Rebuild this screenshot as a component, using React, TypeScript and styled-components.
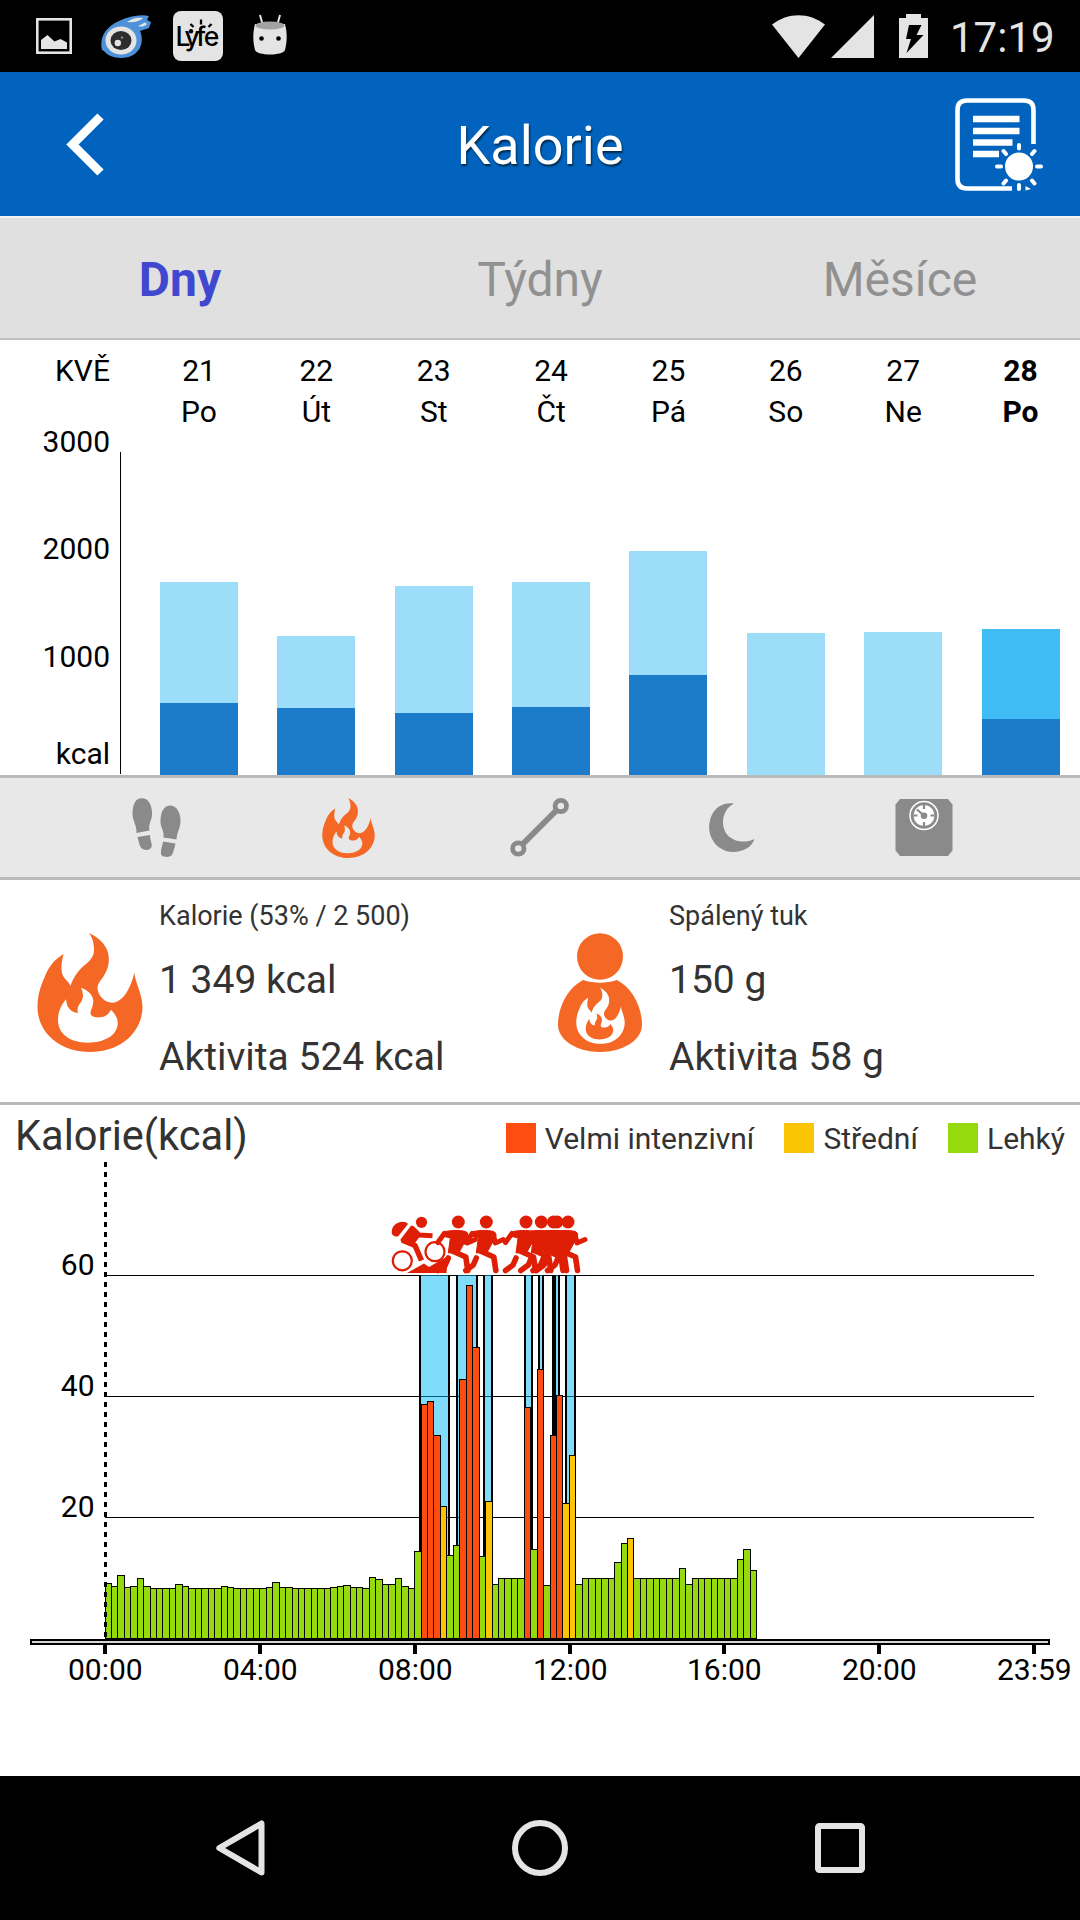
import React from "react";
import styled, { createGlobalStyle } from "styled-components";

const Global = createGlobalStyle`
  * { box-sizing: border-box; }
  body { margin: 0; background: #fff; font-family: Roboto, "Noto Sans", sans-serif; }
  svg { display: block; flex: none; overflow: visible; }
`;

const Screen = styled.div`
  width: 1080px;
  height: 1920px;
  display: flex;
  flex-direction: column;
  background: #fff;
  overflow: hidden;
`;

const StatusBar = styled.header`
  height: 72px;
  flex: none;
  display: flex;
  align-items: center;
  justify-content: space-between;
  background: #000;
  padding: 0 25px 0 36px;
`;

const StatusGroup = styled.div<{ $gap: number }>`
  display: flex;
  align-items: center;
  gap: ${(p) => p.$gap}px;
`;

const Clock = styled.span`
  color: #e4e4e4;
  font-size: 42px;
  line-height: 50px;
  padding-top: 3px;
  margin-left: 22px;
  width: 105px;
  white-space: nowrap;
`;

const TitleBar = styled.div`
  height: 146px;
  flex: none;
  display: grid;
  grid-template-columns: 200px 1fr 200px;
  align-items: center;
  background: #0163bd;
  padding-top: 1px;
  border-bottom: 2px solid #f3f3f3;
`;

const BackSlot = styled.div`
  padding-left: 66px;
`;

const ReportSlot = styled.div`
  display: flex;
  padding-left: 75px;
`;

const Title = styled.h1`
  margin: 0;
  padding-top: 2px;
  text-align: center;
  color: #fff;
  font-size: 54px;
  line-height: 64px;
  font-weight: 400;
  text-shadow: 1px 2px 2px rgba(0, 0, 0, 0.6);
`;

const Tabs = styled.nav`
  height: 122px;
  flex: none;
  display: grid;
  grid-template-columns: repeat(3, 1fr);
  align-items: center;
  background: #e0e0e0;
  border-bottom: 2px solid #c0c0c0;
`;

const Tab = styled.div<{ $active?: boolean }>`
  text-align: center;
  font-size: 48px;
  line-height: 56px;
  padding-top: 4px;
  color: ${(p) => (p.$active ? "#4048d0" : "#919191")};
  font-weight: ${(p) => (p.$active ? 700 : 400)};
`;

const Week = styled.section`
  height: 435px;
  flex: none;
  display: flex;
`;

const WeekScale = styled.div`
  width: 120px;
  padding: 10px 10px 0 0;
  display: flex;
  flex-direction: column;
  align-items: flex-end;
  font-size: 30px;
  line-height: 30px;
  color: #000;
`;

const Month = styled.div`
  height: 77px;
  line-height: 41px;
`;

const ScaleMark = styled.div<{ $after: number }>`
  margin-bottom: ${(p) => p.$after}px;
`;

const WeekAxis = styled.div`
  width: 1px;
  height: 322px;
  margin-top: 112px;
  background: #000;
`;

const Days = styled.div`
  margin-left: 19.32px;
  display: grid;
  grid-template-columns: repeat(8, 117.36px);
`;

const Day = styled.div<{ $today: boolean }>`
  padding-top: 10px;
  display: flex;
  flex-direction: column;
  align-items: center;
  font-size: 30px;
  line-height: 41px;
  color: #000;
  font-weight: ${(p) => (p.$today ? 700 : 400)};
`;

const Stack = styled.div`
  width: 78px;
  margin-top: auto;
`;

const Rest = styled.div<{ $today: boolean }>`
  background: ${(p) => (p.$today ? "#41bdf5" : "#9cddf9")};
`;

const Active = styled.div`
  background: #1d7cc9;
`;

const Metrics = styled.nav`
  height: 105px;
  flex: none;
  display: grid;
  grid-template-columns: repeat(5, 192px);
  justify-content: center;
  align-items: center;
  justify-items: center;
  background: #e8e8e8;
  border-top: 3px solid #bababa;
  border-bottom: 3px solid #bababa;
`;

const Summary = styled.section`
  height: 225px;
  flex: none;
  display: grid;
  grid-template-columns: 159px 350px 160px 1fr;
  border-bottom: 3px solid #bababa;
`;

const SummaryIcon = styled.div<{ $left: number }>`
  padding: 53px 0 0 ${(p) => p.$left}px;
`;

const Facts = styled.div`
  padding-top: 18px;
  color: #333;
  white-space: nowrap;
`;

const FactLabel = styled.div`
  font-size: 27px;
  line-height: 36px;
  margin-bottom: 22px;
`;

const FactValue = styled.div`
  font-size: 39px;
  line-height: 48px;
  margin-bottom: 29px;
`;

const HourHead = styled.div`
  height: 55px;
  flex: none;
  display: flex;
  align-items: center;
  justify-content: space-between;
  padding: 7px 15px 0 15px;
  color: #333;
`;

const HourTitle = styled.h2`
  margin: 0;
  font-size: 41.6px;
  line-height: 48px;
  font-weight: 400;
`;

const Legend = styled.div`
  display: flex;
  gap: 30px;
  padding-top: 6px;
`;

const LegendItem = styled.div`
  display: flex;
  align-items: center;
  gap: 9.2px;
  font-size: 30px;
  line-height: 30px;
  white-space: nowrap;
`;

const Swatch = styled.span<{ $color: string }>`
  width: 30px;
  height: 30px;
  margin-top: -2px;
  background: ${(p) => p.$color};
`;

const NavBar = styled.footer`
  height: 144px;
  margin-top: auto;
  flex: none;
  display: flex;
  align-items: center;
  justify-content: center;
  gap: 247px;
  background: #000;
`;

const RED = "#ff4d11";
const AMBER = "#fbc404";
const GREEN = "#95da0c";
const ORANGE = "#f46724";
const SPORT = "#df1f05";
const GREY = "#8a8a8a";

const week = [
  { date: "21", name: "Po", rest: 121, active: 72 },
  { date: "22", name: "Út", rest: 72, active: 67 },
  { date: "23", name: "St", rest: 127, active: 62 },
  { date: "24", name: "Čt", rest: 125, active: 68 },
  { date: "25", name: "Pá", rest: 124, active: 100 },
  { date: "26", name: "So", rest: 142, active: 0 },
  { date: "27", name: "Ne", rest: 143, active: 0 },
  { date: "28", name: "Po", rest: 90, active: 56 },
];

// Bar heights above the base line, one per ten minutes: [height, repeat, colour]
const runs: [number, number, string][] = [
  [55, 1, GREEN], [52, 1, GREEN], [63, 1, GREEN], [51, 1, GREEN], [52, 1, GREEN], [60, 1, GREEN],
  [52, 1, GREEN], [50, 4, GREEN], [54, 1, GREEN], [52, 1, GREEN], [50, 5, GREEN], [52, 1, GREEN],
  [51, 1, GREEN], [50, 5, GREEN], [51, 1, GREEN], [56, 1, GREEN], [51, 2, GREEN], [50, 6, GREEN],
  [51, 1, GREEN], [52, 1, GREEN], [53, 1, GREEN], [51, 2, GREEN], [50, 1, GREEN], [61, 1, GREEN],
  [59, 1, GREEN], [54, 2, GREEN], [60, 1, GREEN], [52, 1, GREEN], [50, 1, GREEN], [87, 1, GREEN],
  [234, 1, RED], [237, 1, RED], [203, 1, RED], [132, 1, AMBER], [83, 1, GREEN], [93, 1, GREEN],
  [259, 1, RED], [353, 1, RED], [291, 1, RED], [82, 1, GREEN], [137, 1, AMBER], [54, 1, GREEN],
  [60, 4, GREEN], [231, 1, RED], [89, 1, GREEN], [269, 1, RED], [53, 1, GREEN], [203, 1, RED],
  [243, 1, RED], [135, 1, AMBER], [183, 1, AMBER], [54, 1, GREEN], [60, 5, GREEN], [76, 1, GREEN],
  [95, 1, GREEN], [100, 1, AMBER], [60, 7, GREEN], [70, 1, GREEN], [54, 1, GREEN], [60, 7, GREEN],
  [79, 1, GREEN], [89, 1, GREEN], [68, 1, GREEN],
];
const bars = runs.flatMap(([h, n, c]) => Array.from({ length: n }, () => ({ h, c })));
const edge = (i: number) => Math.floor(104.9 + i * 6.452) + (i === 0 ? 1 : 0);

// Exercise intervals: outer left, width of left rule, outer right
const spans = [
  [419, 2, 450], [456, 2, 478], [483, 2, 493], [524, 2, 533], [538, 2, 544], [552, 4, 560], [565, 2, 576],
];

const ticks = ["00:00", "04:00", "08:00", "12:00", "16:00", "20:00", "23:59"];
const tickX = [105, 260, 415, 570, 724, 879, 1034];

function Flame({ w, h, color }: { w: number; h: number; color: string }) {
  return (
    <svg width={w} height={h} viewBox="0 0 106 119" preserveAspectRatio="none">
      <FlameShape color={color} />
    </svg>
  );
}

function FlameShape({ color }: { color: string }) {
  return (
    <path
      fill={color}
      fillRule="evenodd"
      d="M51.9 0C63 5 71.8 14 71.8 25.3C72 33 70 38 66.3 43.7C62 49 60.5 52 60.5 55.3C61 63 68 69.7 75 69.7C82 69.7 88 63 91 57C94 51 96 46 97.3 39.5C98.500 51 105.500 61 105.500 74C105 100 83 119 53 119C23 119 .5 100 .5 73.700C.5 62 4 52 7.800 43.700C12 33 18 26 26.700 21C24.500 28 24 35 25 40.300C27 47 32 48 33.300 53C36 45 40 39 45.600 33.700C53 28 57 24 57 17C57 9 55 4 51.900 0ZM44 54.700C51 57 56 62 56.300 68C56.500 74 52 79 54 82C57 84.500 60 84.500 63 84.300C68 84 72 81 74 76.700C78 81 80.800 85 80.800 90.300C80 103 67 109.700 50.800 109.700C33 109.700 21 101 21 87C21 78 25 71 29 66.300C29.500 70 30 73 32 75.300C34 78 37 80 40.800 80C40 76 41 73 43 70.500C47 66 46.500 60 44 54.700Z"
    />
  );
}

function Runner({ x }: { x: number }) {
  return (
    <g transform={`translate(${x} 1222)`} stroke={SPORT} strokeLinecap="round" strokeLinejoin="round" fill="none">
      <circle cx="0" cy="0" r="6.5" fill={SPORT} stroke="none" />
      <path d="M-14 11.500L-20.500 20.500M7 12L9 21L17 17.500" strokeWidth="5" />
      <path d="M-15 10C-8 8 2 8 7 9.500C11 11 10 15 7 19L1 30L-10 31L-8 16L-16 14Z" fill={SPORT} strokeWidth="1" />
      <path d="M-6 29L7.500 35L9.500 48.500" strokeWidth="5.600" />
      <path d="M-10 36L-13 43L-20.500 48.500" strokeWidth="5.600" />
    </g>
  );
}

function Cyclist() {
  return (
    <g stroke={SPORT} fill="none" strokeLinejoin="round">
      <circle cx="402.300" cy="1260.800" r="9.500" strokeWidth="2.200" />
      <circle cx="435" cy="1251.700" r="9.500" strokeWidth="2.200" />
      <circle cx="421.500" cy="1222.300" r="5.600" fill={SPORT} stroke="none" />
      <path d="M391.700 1232C391.500 1226 397 1222 402 1221.700C405 1221.700 407 1222.500 408 1224L398 1236.500C395 1237 392 1236 391.700 1232Z" fill={SPORT} stroke="none" />
      <path d="M412 1227L402 1240L413 1243L419 1235Z" fill={SPORT} strokeWidth="3" />
      <path d="M402 1240L415 1245.500L421.500 1260.500" strokeWidth="5.500" />
      <path d="M412 1228L419 1235L432.500 1235.700" strokeWidth="5" />
      <path d="M407 1273L424 1263.500L429 1267L448 1256L446.500 1273Z" fill={SPORT} stroke="none" />
    </g>
  );
}

function HourChart() {
  return (
    <svg width="1080" height="616" viewBox="0 1160 1080 616" fontFamily="Roboto, 'Noto Sans', sans-serif" fontSize="30">
      {[["60", 1275], ["40", 1396], ["20", 1517]].map(([t, y]) => (
        <g key={t}>
          <rect x="105" y={y} width="929" height="1" fill="#000" />
          <text x="94.500" y={y} textAnchor="end">{t}</text>
        </g>
      ))}
      <path d="M105.500 1162V1638" stroke="#000" strokeWidth="3" strokeDasharray="5 5" />
      {spans.map(([l, lw, r]) => (
        <g key={l} shapeRendering="crispEdges">
          <rect x={l} y="1275" width={r - l} height="363" fill="#00b9f5" opacity=".5" />
          <rect x={l} y="1275" width={lw} height="363" />
          <rect x={r - 2} y="1275" width="2" height="363" />
        </g>
      ))}
      {bars.map((b, i) => (
        <rect
          key={i}
          x={edge(i) + 0.5}
          y={1638.5 - b.h}
          width={edge(i + 1) - edge(i)}
          height={b.h}
          fill={b.c}
          stroke="#000"
        />
      ))}
      <path d="M105.500 1582V1638" stroke="#000" strokeWidth="3" strokeDasharray="5 5" />
      <Cyclist />
      {[458.3, 486.3, 526, 541.3, 553.5, 557, 568].map((x) => (
        <Runner key={x} x={x} />
      ))}
      <rect x="31" y="1640" width="1018" height="4" fill="#d9d5d9" stroke="#000" strokeWidth="2" />
      {ticks.map((t, i) => (
        <g key={t}>
          <rect x={tickX[i] - 2} y="1645" width="4" height="9" />
          <text x={tickX[i] + 0.3} y="1680" textAnchor="middle">{t}</text>
        </g>
      ))}
    </svg>
  );
}

export default function App() {
  return (
    <Screen>
      <Global />
      <StatusBar>
        <StatusGroup $gap={29}>
          <svg width="36" height="36" viewBox="0 0 36 36">
            <rect x="1.300" y="1.300" width="33.400" height="33.400" fill="none" stroke="#e4e4e4" strokeWidth="2.600" />
            <path d="M5 31V22L11.500 17L18.500 23.500L24.500 21L31 24.500V31Z" fill="#e4e4e4" />
          </svg>
          <svg width="50" height="43" viewBox="0 0 50 43">
            <path d="M1 35C-2 20 7 11 18 6C28 1 40 -1 48 1L46 5L50 7L48 13L39 16C44 27 39 43 20 43C12 43 6 40 3 36Z" fill="#4e91d8" />
            <ellipse cx="20" cy="25.500" rx="15.500" ry="14" fill="#e4e4e4" />
            <ellipse cx="20" cy="25.500" rx="10.500" ry="9.500" fill="#2d2d2d" />
            <circle cx="16.800" cy="28" r="3.200" fill="#e4e4e4" />
            <circle cx="21" cy="22.500" r="1.200" fill="#888" />
            <path d="M26 7C31 3 37 2 42 3C39 6 34 8 26 7ZM37 11L44 7.500L46 9C43 12 40 12 37 11Z" fill="#e4e4e4" />
          </svg>
          <svg width="50" height="50" viewBox="0 0 50 50" style={{ marginLeft: -7 }}>
            <rect width="50" height="50" rx="8" fill="#e4e4e4" />
            <text x="2.500 11.500 23 30.800" y="34.700" fontSize="26.500" fontFamily="Inter, Roboto, sans-serif" fontWeight="500">Lyfe</text>
            <circle cx="18" cy="20.300" r="2.200" />
            <path d="M28 8.500V13.500M17.500 13L20.500 16M38.500 13L35.500 16" stroke="#000" strokeWidth="2.300" fill="none" />
          </svg>
          <svg width="34" height="40" viewBox="0 0 34 40" style={{ marginLeft: 1 }}>
            <path d="M7 -1L9.500 8M27 -1L24.500 8" stroke="#e4e4e4" strokeWidth="2" />
            <path d="M2 8L32 8C34 16 34.500 24 32 34C30 40 4 40 2 34C-.5 24 0 16 2 8Z" fill="#e4e4e4" />
            <ellipse cx="17" cy="9.500" rx="14.500" ry="4" fill="#a3a3a3" />
            <circle cx="8.500" cy="22.500" r="2.300" />
            <circle cx="25.500" cy="22.500" r="2.300" />
          </svg>
        </StatusGroup>
        <StatusGroup $gap={0}>
          <svg width="53" height="43" viewBox="0 0 53 43">
            <path d="M26.500 43L0 9.500C16 -3 37 -3 53 9.500Z" fill="#e4e4e4" />
          </svg>
          <svg width="43" height="43" viewBox="0 0 43 43" style={{ marginLeft: 6 }}>
            <path d="M0 43L43 0V43Z" fill="#e4e4e4" />
          </svg>
          <svg width="29" height="44" viewBox="0 0 29 44" style={{ marginLeft: 25 }}>
            <path d="M0 4H7V0H22V4H29V44H0Z" fill="#e4e4e4" />
            <path d="M10 11H22.500L17.500 21H24.500L7.500 39L12 25H7Z" fill="#000" />
          </svg>
          <Clock>17:19</Clock>
        </StatusGroup>
      </StatusBar>

      <TitleBar>
        <BackSlot>
          <svg width="38" height="63" viewBox="0 0 38 63">
            <path d="M34.500 3.500L6.500 31.500L34.500 59.500" fill="none" stroke="#fff" strokeWidth="8.800" />
          </svg>
        </BackSlot>
        <Title>Kalorie</Title>
        <ReportSlot>
          <svg width="88" height="94" viewBox="0 0 88 94">
            <path d="M57 90.500H12Q2.500 90.500 2.500 81V12Q2.500 2.500 12 2.500H69Q78.500 2.500 78.500 12V46" fill="none" stroke="#fff" strokeWidth="4.600" />
            <path d="M18 21H64.500M18 33H64.500M18 44.500H57.500M18 56H44" stroke="#fff" strokeWidth="6.400" />
            <circle cx="64" cy="68.500" r="14" fill="#fff" />
            <g stroke="#fff" strokeWidth="4" strokeLinecap="round">
              <path d="M64 47V50.500M64 87V91M42 68.500H46M82 68.500H86M48.500 53L51 56M79.500 53L77 56M48.500 85.500L51 82.500M79.500 85.500L77 82.500" />
            </g>
            <path d="M70.500 92.500V88L76 91Z" fill="#fff" />
          </svg>
        </ReportSlot>
      </TitleBar>

      <Tabs>
        <Tab $active>Dny</Tab>
        <Tab>Týdny</Tab>
        <Tab>Měsíce</Tab>
      </Tabs>

      <Week>
        <WeekScale>
          <Month>KVĚ</Month>
          <ScaleMark $after={77}>3000</ScaleMark>
          <ScaleMark $after={78}>2000</ScaleMark>
          <ScaleMark $after={67}>1000</ScaleMark>
          <ScaleMark $after={0}>kcal</ScaleMark>
        </WeekScale>
        <WeekAxis />
        <Days>
          {week.map((d) => {
            const today = d.date === "28";
            return (
              <Day key={d.date} $today={today}>
                <span>{d.date}</span>
                <span>{d.name}</span>
                <Stack>
                  <Rest $today={today} style={{ height: d.rest }} />
                  <Active style={{ height: d.active }} />
                </Stack>
              </Day>
            );
          })}
        </Days>
      </Week>

      <Metrics>
        <svg width="49" height="59" viewBox="0 0 49 59" fill={GREY}>
          <path d="M4.500 35C5 27 0 22 .5 15C1 5 4 .5 9.500 .3C16 0 19.500 6 20 14C20.500 23 16 25 17.500 32.500ZM5.500 39L18 37C18 42 20 45 19.800 48C19 53 11 53 8.500 49C7 46 6.500 42 5.500 39Z" />
          <path d="M44.500 41.500L31.500 39.500C32.500 32 28 30 28.500 22C29 13 32 7.500 38.500 7.500C45 7.500 49 16 48.500 24C48 31 45 34 44.500 41.500ZM31 43.500L43.500 45.500C42.500 50 41.500 54 40 57C37 60 29 59.500 29 55.500C28.500 51 30.500 48 31 43.500Z" />
        </svg>
        <Flame w={53} h={60} color={ORANGE} />
        <svg width="59" height="59" viewBox="1 0 59 59" fill="none" stroke={GREY}>
          <circle cx="8.300" cy="50.500" r="5.700" strokeWidth="4.800" />
          <circle cx="50.800" cy="8" r="5.700" strokeWidth="4.800" />
          <path d="M12.800 46L46.300 12.500" strokeWidth="6" />
        </svg>
        <svg width="46" height="49" viewBox="0 0 46 49" fill={GREY}>
          <path d="M25 .5C8 -1.500 0 12 .2 25C.5 38 11 49 24 49C34 49 43 44 45.500 36C30 43 14 35 14 19.500C14 11 18 4 25 .5Z" />
        </svg>
        <svg width="58" height="58" viewBox="0 .5 58 58">
          <path d="M5 .5H53L57.500 6V52L53 57.500H5L.5 52V6Z" fill={GREY} />
          <circle cx="29" cy="17" r="14" fill="none" stroke="#fff" strokeWidth="1.500" />
          <circle cx="29" cy="17" r="10.500" fill="#fff" />
          <path d="M29 6.500V10.500M29 23.500V27.500M18.500 17H22.500M35.500 17H39.500M22 11L29 17" stroke={GREY} strokeWidth="2.200" />
          <circle cx="29" cy="17.300" r="3.300" fill={GREY} />
        </svg>
      </Metrics>

      <Summary>
        <SummaryIcon $left={37}>
          <Flame w={106} h={119} color={ORANGE} />
        </SummaryIcon>
        <Facts>
          <FactLabel>Kalorie (53% / 2 500)</FactLabel>
          <FactValue>1 349 kcal</FactValue>
          <FactValue>Aktivita 524 kcal</FactValue>
        </Facts>
        <SummaryIcon $left={49}>
          <svg width="84" height="119" viewBox="0 0 84 119">
            <ellipse cx="42" cy="23.500" rx="23" ry="23.300" fill={ORANGE} />
            <path d="M25 47C36 50.500 48 50.500 59 47C74 55 84 73 84 92C84 107 65 119 42 119C19 119 0 107 0 92C0 73 10 55 25 47Z" fill={ORANGE} />
            <g transform="translate(18 54.700) scale(.462 .472)">
              <FlameShape color="#fff" />
            </g>
          </svg>
        </SummaryIcon>
        <Facts>
          <FactLabel>Spálený tuk</FactLabel>
          <FactValue>150 g</FactValue>
          <FactValue>Aktivita 58 g</FactValue>
        </Facts>
      </Summary>

      <HourHead>
        <HourTitle>Kalorie(kcal)</HourTitle>
        <Legend>
          <LegendItem><Swatch $color={RED} />Velmi intenzivní</LegendItem>
          <LegendItem><Swatch $color={AMBER} />Střední</LegendItem>
          <LegendItem><Swatch $color={GREEN} />Lehký</LegendItem>
        </Legend>
      </HourHead>
      <HourChart />

      <NavBar>
        <svg width="49" height="56" viewBox="0 0 49 56" fill="none" stroke="#e4e4e4" strokeWidth="6" strokeLinejoin="round">
          <path d="M45.500 3.500V52.500L3.300 28Z" />
        </svg>
        <svg width="56" height="56" viewBox="0 0 56 56" fill="none" stroke="#e4e4e4" strokeWidth="6">
          <circle cx="28" cy="28" r="25" />
        </svg>
        <svg width="50" height="50" viewBox="0 0 50 50" fill="none" stroke="#e4e4e4" strokeWidth="6">
          <rect x="3" y="3" width="44" height="44" rx="1.500" />
        </svg>
      </NavBar>
    </Screen>
  );
}
